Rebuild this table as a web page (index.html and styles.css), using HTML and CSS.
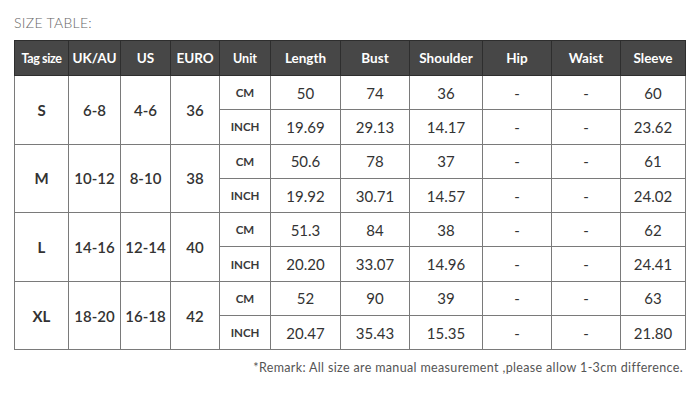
FILE: index.html
```html
<!DOCTYPE html>
<html>
<head>
<meta charset="utf-8">
<link rel="stylesheet" href="styles.css">
</head>
<body>
<div class="page">
  <div class="title">SIZE TABLE:</div>
  <table class="sizes">
    <colgroup>
      <col style="width:54px"><col style="width:52px"><col style="width:50px"><col style="width:49px"><col style="width:51px"><col style="width:70px"><col style="width:69px"><col style="width:73px"><col style="width:69px"><col style="width:69px"><col style="width:65px">
    </colgroup>
    <thead>
      <tr><th class="tag">Tag size</th><th>UK/AU</th><th>US</th><th>EURO</th><th class="unith">Unit</th><th>Length</th><th>Bust</th><th>Shoulder</th><th>Hip</th><th>Waist</th><th>Sleeve</th></tr>
    </thead>
    <tbody>
      <tr><td rowspan="2" class="sz">S</td><td rowspan="2" class="md">6-8</td><td rowspan="2" class="md">4-6</td><td rowspan="2" class="md">36</td><td class="unit">CM</td><td>50</td><td>74</td><td>36</td><td>-</td><td>-</td><td>60</td></tr>
      <tr><td class="unit">INCH</td><td>19.69</td><td>29.13</td><td>14.17</td><td>-</td><td>-</td><td>23.62</td></tr>
      <tr><td rowspan="2" class="sz">M</td><td rowspan="2" class="md">10-12</td><td rowspan="2" class="md">8-10</td><td rowspan="2" class="md">38</td><td class="unit">CM</td><td>50.6</td><td>78</td><td>37</td><td>-</td><td>-</td><td>61</td></tr>
      <tr><td class="unit">INCH</td><td>19.92</td><td>30.71</td><td>14.57</td><td>-</td><td>-</td><td>24.02</td></tr>
      <tr><td rowspan="2" class="sz">L</td><td rowspan="2" class="md">14-16</td><td rowspan="2" class="md">12-14</td><td rowspan="2" class="md">40</td><td class="unit">CM</td><td>51.3</td><td>84</td><td>38</td><td>-</td><td>-</td><td>62</td></tr>
      <tr><td class="unit">INCH</td><td>20.20</td><td>33.07</td><td>14.96</td><td>-</td><td>-</td><td>24.41</td></tr>
      <tr><td rowspan="2" class="sz">XL</td><td rowspan="2" class="md">18-20</td><td rowspan="2" class="md">16-18</td><td rowspan="2" class="md">42</td><td class="unit">CM</td><td>52</td><td>90</td><td>39</td><td>-</td><td>-</td><td>63</td></tr>
      <tr><td class="unit">INCH</td><td>20.47</td><td>35.43</td><td>15.35</td><td>-</td><td>-</td><td>21.80</td></tr>
    </tbody>
  </table>
  <div class="remark">*Remark: All size are manual measurement ,please allow 1-3cm difference.</div>
</div>
</body>
</html>
```

FILE: styles.css
```css
html, body {
  margin: 0;
  padding: 0;
  background: #ffffff;
}
.page {
  width: 700px;
  height: 408px;
  padding: 14px 0 0 14px;
  box-sizing: border-box;
  font-family: Lato, "Noto Sans", sans-serif;
  color: #333;
}
.title {
  font-size: 14px;
  font-weight: 300;
  color: #666;
  letter-spacing: 0.3px;
  height: 26px;
  line-height: 18px;
}
.sizes {
  border-collapse: collapse;
  table-layout: fixed;
  width: 671px;
}
.sizes th {
  background: #474747;
  color: #fff;
  font-weight: 700;
  font-size: 13.5px;
  height: 34px;
  padding: 0;
  border: 1px solid #2e2e2e;
  text-align: center;
  white-space: nowrap;
}
.sizes th.tag {
  font-size: 12.5px;
  letter-spacing: -0.4px;
}
.sizes th.unith {
  font-size: 12.5px;
}
.sizes td {
  border: 1px solid #7a7a7a;
  height: 33.3px;
  padding: 0;
  text-align: center;
  font-size: 15px;
  font-weight: 400;
  color: #333;
  white-space: nowrap;
}
.sizes td.sz {
  font-weight: 700;
  font-size: 15px;
}
.sizes td.md {
  font-weight: 600;
  font-size: 15px;
}
.sizes td.unit {
  font-size: 11.5px;
  font-weight: 700;
  color: #3a3a3a;
}
.remark {
  width: 669px;
  text-align: right;
  font-size: 12.5px;
  color: #555;
  margin-top: 10px;
  letter-spacing: 0.35px;
}
```
